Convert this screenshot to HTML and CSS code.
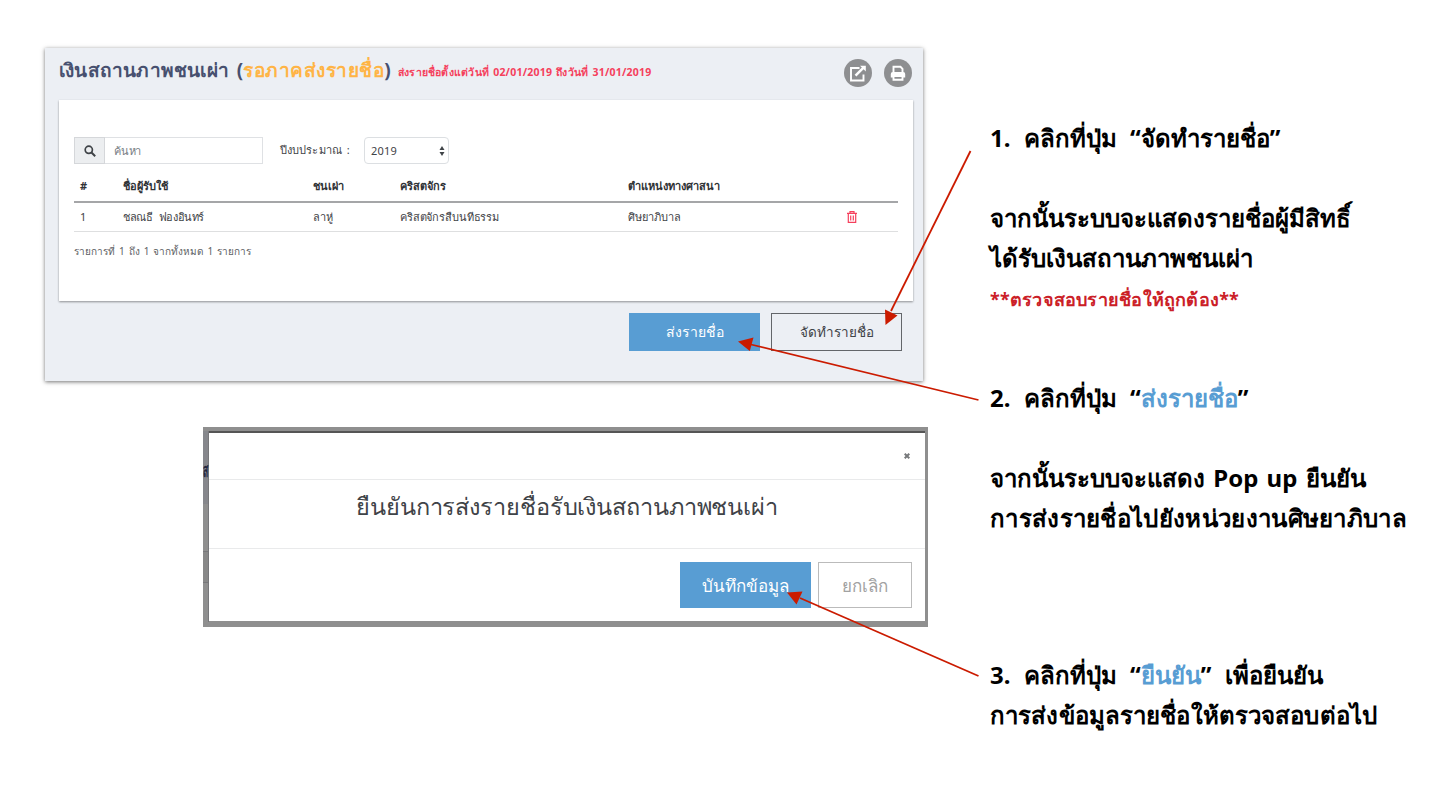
FILE: index.html
```
<!DOCTYPE html>
<html lang="th">
<head>
<meta charset="utf-8">
<title>เงินสถานภาพชนเผ่า</title>
<link rel="stylesheet" href="styles.css">
</head>
<body>
<main class="page">
  <div class="screens">
    <section class="panel">
      <header class="panel-head">
        <h1 class="title">เงินสถานภาพชนเผ่า (<span class="status">รอภาคส่งรายชื่อ</span>)</h1>
        <span class="period">ส่งรายชื่อตั้งแต่วันที่ 02/01/2019 ถึงวันที่ 31/01/2019</span>
        <span class="tool tool-first"><svg viewBox="0 0 28 28" width="28" height="28"><path d="M15.500 9H7v12.500h12.500v-6" fill="none" stroke="#fff" stroke-width="1.900"/><path d="M11.500 16.700L19.500 8.700" stroke="#fff" stroke-width="2.400"/><path d="M16 6.700H21.800V12.500Z" fill="#fff"/></svg></span>
        <span class="tool"><svg viewBox="0 0 28 28" width="28" height="28"><path d="M9.500 13.500V7.800h7l2 2v3.700" fill="none" stroke="#fff" stroke-width="1.900"/><path d="M6.800 18.500v-3.500q0-2 2-2h10.400q2 0 2 2v3.500z" fill="#fff"/><path d="M9.500 17h9v3.700h-9z" fill="#8e8f91" stroke="#fff" stroke-width="1.900"/></svg></span>
      </header>
      <div class="card">
        <div class="filters">
          <span class="search-icon"><svg viewBox="0 0 12 12" width="12" height="12"><circle cx="4.800" cy="4.800" r="3.600" fill="none" stroke="#3f4347" stroke-width="1.700"/><path d="M7.500 7.500L11.200 11.200" stroke="#3f4347" stroke-width="2"/></svg></span>
          <span class="search-box">ค้นหา</span>
          <span class="year-label">ปีงบประมาณ :</span>
          <span class="select"><span class="year">2019</span><svg viewBox="0 0 6 10" width="6" height="10"><path d="M3 0L5.500 4H.5zM3 10L.5 6H5.500z" fill="#3f4347"/></svg></span>
        </div>
        <div class="row head">
          <span>#</span><span>ชื่อผู้รับใช้</span><span>ชนเผ่า</span><span>คริสตจักร</span><span>ตำแหน่งทางศาสนา</span><span></span>
        </div>
        <div class="row item">
          <span>1</span><span class="person">ชลณธี ฟองอินทร์</span><span>ลาหู่</span><span class="church">คริสตจักรสืบนทีธรรม</span><span>ศิษยาภิบาล</span><span class="trash"><svg viewBox="0 0 10 12" width="10" height="12"><path d="M0 2.300h10M3 2V.6h4V2M1.300 2.500v8.800h7.400V2.500M3.700 4.500v5M6.300 4.500v5" fill="none" stroke="#f5405c" stroke-width="1.200"/></svg></span>
        </div>
        <p class="count">รายการที่ 1 ถึง 1 จากทั้งหมด 1 รายการ</p>
      </div>
      <div class="actions">
        <span class="btn primary">ส่งรายชื่อ</span>
        <span class="btn outline">จัดทำรายชื่อ</span>
      </div>
    </section>
    <section class="backdrop">
      <div class="behind">
        <div class="sliver"><span class="cut">ส</span></div>
        <div class="sliver-row"></div>
      </div>
      <div class="modal">
        <div class="modal-head"><svg viewBox="0 0 6 6" width="6" height="6"><path d="M.7.7L5.300 5.300M5.300.7L.7 5.300" stroke="#77797b" stroke-width="2"/></svg></div>
        <div class="modal-body">ยืนยันการส่งรายชื่อรับเงินสถานภาพชนเผ่า</div>
        <div class="modal-foot"><span class="mbtn save">บันทึกข้อมูล</span><span class="mbtn cancel">ยกเลิก</span></div>
      </div>
    </section>
  </div>
  <aside class="notes">
    <p class="step">1. คลิกที่ปุ่ม “จัดทำรายชื่อ”</p>
    <p></p>
    <p>จากนั้นระบบจะแสดงรายชื่อผู้มีสิทธิ์</p>
    <p>ได้รับเงินสถานภาพชนเผ่า</p>
    <p class="warn">**ตรวจสอบรายชื่อให้ถูกต้อง**</p>
    <p class="step second">2. คลิกที่ปุ่ม “<b>ส่งรายชื่อ</b>”</p>
    <p></p>
    <p class="popup">จากนั้นระบบจะแสดง Pop up ยืนยัน</p>
    <p class="unit">การส่งรายชื่อไปยังหน่วยงานศิษยาภิบาล</p>
    <p class="step third">3. คลิกที่ปุ่ม “<b>ยืนยัน</b>” เพื่อยืนยัน</p>
    <p class="last">การส่งข้อมูลรายชื่อให้ตรวจสอบต่อไป</p>
  </aside>
  <svg class="arrows" viewBox="0 0 1440 788" width="1440" height="788"><g stroke="#cb1b00" stroke-width="1.800"><path d="M970.500 151L891 311"/><path d="M978.500 400L751 344.500"/><path d="M978.500 676L800 598"/></g><g fill="#cb1b00"><path d="M885.500 325L885 309.500L897.500 315.500Z"/><path d="M738 341.500L753.500 337.500L749.800 351Z"/><path d="M787 592.500L802.500 591.500L796.500 604.500Z"/></g></svg>
</main>
</body>
</html>
```
FILE: styles.css
```
* { box-sizing: border-box; }
body { margin: 0; background: #fff; font-family: "Noto Sans", "Liberation Sans", sans-serif; color: #3f4347; }
p, h1 { margin: 0; font-weight: inherit; }
span, p, h1 { white-space: nowrap; }
svg { display: block; }
.page { position: relative; width: 1440px; height: 788px; overflow: hidden; display: grid; grid-template-columns: 990px 1fr; }
.screens { padding: 48px 0 0 45px; }
.panel { width: 878px; height: 333px; background: #eceff4; box-shadow: 0 1px 4px rgba(0,0,0,.55); padding: 0 10px 0 14px; }
.panel-head { height: 52px; display: flex; align-items: center; padding-bottom: 3px; }
.title { font-size: 19px; font-weight: 700; color: #47506f; line-height: 44px; letter-spacing: .2px; word-spacing: 2.500px; padding-bottom: 6px; }
.status { color: #ffb445; letter-spacing: .5px; }
.period { font-size: 10.500px; font-weight: 700; color: #f5405c; letter-spacing: .22px; word-spacing: 1.200px; margin-left: 7px; flex: 1; }
.tool { width: 28px; height: 28px; border-radius: 50%; background: #8e8f91; margin-right: 1px; }
.tool-first { margin-right: 12px; }
.card { height: 201px; background: #fff; box-shadow: 0 1px 2px rgba(0,0,0,.4); padding: 37px 15px 0; font-size: 11px; }
.filters { display: flex; height: 27px; align-items: center; }
.search-icon { width: 31px; height: 27px; border: 1px solid #d5d7da; background: #eceef0; display: grid; place-items: center; }
.search-box { width: 158px; height: 27px; border: 1px solid #dfe1e4; border-left: 0; padding-left: 9px; line-height: 25px; color: #777d84; letter-spacing: -.25px; }
.year-label { width: 84px; margin-left: 17px; padding-bottom: 2px; letter-spacing: .1px; word-spacing: 2px; }
.select { width: 85px; height: 27px; border: 1px solid #dcdfe2; border-radius: 4px; display: flex; align-items: center; justify-content: space-between; padding: 0 3px 0 6px; }
.year { letter-spacing: .2px; padding-bottom: 1px; }
.row { display: grid; grid-template-columns: 43px 190px 87px 228px 219px 1fr; padding-left: 6px; align-items: center; }
.head { height: 39px; border-bottom: 2px solid #a5a6a8; font-weight: 700; padding-top: 6px; color: #2f3236; }
.item { height: 29px; border-bottom: 1px solid #dedfe0; padding-bottom: 1px; }
.person { letter-spacing: -.4px; word-spacing: 4px; }
.church { letter-spacing: -.13px; }
.count { font-size: 10px; line-height: 39px; word-spacing: 1.400px; color: #5c6063; }
.actions { display: flex; justify-content: flex-end; gap: 11px; padding: 12px 11px 0 0; }
.btn { width: 131px; height: 38px; font-size: 14px; font-weight: 500; display: grid; place-items: center; }
.primary { background: #589dd3; color: #fff; }
.outline { border: 1px solid #63666a; font-size: 13.500px; }
.backdrop { margin: 46px 0 0 158px; width: 725px; height: 200px; background: #8f8f8f; display: flex; padding-top: 4px; }
.behind { width: 6px; border-right: 1px solid #77777a; height: 191px; }
.sliver { height: 73px; background: #86878c; padding-top: 24px; }
.cut { font-size: 19px; font-weight: 700; color: #23263f; display: block; width: 11px; transform: scaleX(.45); transform-origin: left; }
.sliver-row { margin-top: 47px; height: 32px; border: 1px solid #77777a; border-width: 1px 0; background: #888; }
.modal { width: 716px; height: 190px; background: #fff; border-top: 2px solid #555; }
.modal-head { height: 47px; border-bottom: 1px solid #e9eaeb; display: flex; justify-content: flex-end; align-items: center; padding-right: 15px; }
.modal-body { height: 69px; border-bottom: 1px solid #e9eaeb; text-align: center; font-size: 23.500px; letter-spacing: -.1px; line-height: 53px; }
.modal-foot { display: flex; justify-content: flex-end; gap: 7px; padding: 13px 13px 0 0; font-size: 17px; }
.mbtn { height: 46px; display: grid; place-items: center; }
.save { width: 131px; background: #589dd3; color: #fff; font-weight: 500; }
.cancel { width: 94px; border: 1px solid #bbb; color: #a2a2a2; }
.notes { padding-top: 118px; font-size: 24px; font-weight: 700; color: #000; line-height: 40px; }
.notes p { height: 40px; }
.notes b { color: #589dd3; }
.notes .step { word-spacing: 7px; }
.notes .popup { word-spacing: 2px; }
.notes .unit { letter-spacing: .31px; }
.notes .last { letter-spacing: .11px; }
.notes .warn { font-size: 18px; letter-spacing: .22px; color: #cb2027; line-height: 42px; }
.notes .second { margin-top: 60px; }
.notes .third { margin-top: 117px; }
.arrows { position: absolute; left: 0; top: 0; }
```
